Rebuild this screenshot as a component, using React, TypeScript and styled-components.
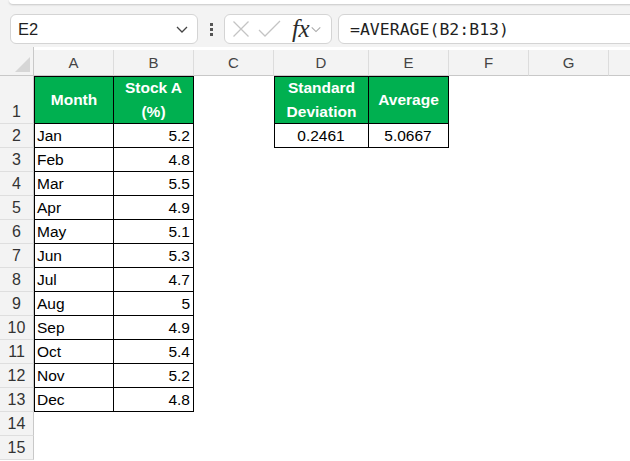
import React from 'react';
import styled, { createGlobalStyle, css } from 'styled-components';

const GlobalStyle = createGlobalStyle`
  html, body {
    margin: 0;
    padding: 0;
    background: #ffffff;
  }
  * {
    box-sizing: border-box;
  }
`;

const Page = styled.div`
  width: 630px;
  height: 461px;
  overflow: hidden;
  background: #f3f3f3;
  font-family: 'Liberation Sans', Arial, sans-serif;
  color: #000;
`;

const RibbonEdge = styled.div`
  height: 4px;
  margin: 0 -12px 0 9px;
  background: #ffffff;
  border-radius: 0 0 8px 8px;
  box-shadow: 0 1px 2px rgba(0, 0, 0, 0.18);
`;

const FormulaBar = styled.div`
  display: flex;
  align-items: center;
  height: 43px;
  padding: 10px 0 3px 10px;
`;

const Box = styled.div`
  height: 30px;
  background: #ffffff;
  border: 1px solid #d4d4d4;
  border-radius: 6px;
  display: flex;
  align-items: center;
`;

const NameBox = styled(Box)`
  width: 188px;
  padding: 0 8px 0 7px;
  justify-content: space-between;
  font-size: 16.5px;
  color: #1f1f1f;
`;

const Kebab = styled.div`
  width: 26px;
  display: flex;
  flex-direction: column;
  align-items: center;
  gap: 2px;
  span {
    width: 3px;
    height: 3px;
    background: #555;
  }
`;

const FxBox = styled(Box)`
  width: 108px;
  padding: 0 3px 0 7px;
  gap: 0;
`;

const FxLabel = styled.span`
  font-family: 'Liberation Serif', 'Times New Roman', serif;
  font-style: italic;
  font-size: 25px;
  line-height: 28px;
  color: #2b2b2b;
  margin: 0 1px 0 10px;
  letter-spacing: -0.5px;
`;

const FormulaInput = styled(Box)`
  flex: 1;
  margin: 0 -20px 0 6px;
  padding-left: 11px;
  font-family: 'DejaVu Sans Mono', monospace;
  font-size: 16.5px;
  color: #1f1f1f;
`;

const Sheet = styled.div`
  display: grid;
  grid-template-columns: 34px 80px 80px 80px 95px 80px 80px 80px 80px;
  grid-template-rows: 29px 48px repeat(15, 24px);
  background: #ffffff;
`;

const Corner = styled.div`
  background: #f3f3f3;
  border-right: 1px solid #c8c8c8;
  border-bottom: 1px solid #c8c8c8;
  position: relative;
  &::after {
    content: '';
    position: absolute;
    right: 3px;
    bottom: 3px;
    border-style: solid;
    border-width: 0 0 15px 15px;
    border-color: transparent transparent #d6d6d6 transparent;
  }
`;

const ColHead = styled.div`
  background: #f3f3f3;
  border-right: 1px solid #dcdcdc;
  border-bottom: 1px solid #c8c8c8;
  margin-top: 3px;
  display: flex;
  align-items: center;
  justify-content: center;
  font-size: 15px;
  color: #444;
`;

const RowHead = styled.div<{ $bottom?: boolean }>`
  background: #f3f3f3;
  border-right: 1px solid #c8c8c8;
  border-bottom: 1px solid #dedede;
  display: flex;
  align-items: ${(p) => (p.$bottom ? 'flex-end' : 'center')};
  justify-content: center;
  padding-bottom: ${(p) => (p.$bottom ? '2px' : '0')};
  font-size: 16px;
  color: #333;
`;

const Cell = styled.div<{
  $boxed?: boolean;
  $left?: boolean;
  $top?: boolean;
  $head?: boolean;
  $align?: 'left' | 'right' | 'center';
}>`
  display: flex;
  align-items: center;
  padding: 1px 3px 0 2px;
  font-size: 15.5px;
  line-height: 24px;
  justify-content: ${(p) =>
    p.$align === 'right' ? 'flex-end' : p.$align === 'center' ? 'center' : 'flex-start'};
  text-align: ${(p) => p.$align || 'left'};
  ${(p) =>
    p.$boxed &&
    css`
      border-right: 1px solid #000;
      border-bottom: 1px solid #000;
    `}
  ${(p) => p.$left && 'border-left: 1px solid #000;'}
  ${(p) => p.$top && 'border-top: 1px solid #000;'}
  ${(p) =>
    p.$head &&
    css`
      background: #00b050;
      color: #fff;
      font-weight: bold;
      padding: 0 2px;
    `}
`;

const Chevron = ({ size = 14, color = '#444' }: { size?: number; color?: string }) => (
  <svg width={size} height={size} viewBox="0 0 14 14">
    <polyline points="2,5 7,10 12,5" fill="none" stroke={color} strokeWidth="1.3" />
  </svg>
);

const CancelIcon = () => (
  <svg width="18" height="18" viewBox="0 0 18 18">
    <path d="M1.5 1.5 L16.5 16.5 M16.5 1.5 L1.5 16.5" stroke="#c4c4c4" strokeWidth="1.3" fill="none" />
  </svg>
);

const CheckIcon = () => (
  <svg width="24" height="18" viewBox="0 0 24 18" style={{ marginLeft: 8 }}>
    <polyline points="1,10 7,16 22,1" stroke="#c4c4c4" strokeWidth="1.3" fill="none" />
  </svg>
);

const columns = ['A', 'B', 'C', 'D', 'E', 'F', 'G', 'H'];

const stock: [string, string][] = [
  ['Jan', '5.2'],
  ['Feb', '4.8'],
  ['Mar', '5.5'],
  ['Apr', '4.9'],
  ['May', '5.1'],
  ['Jun', '5.3'],
  ['Jul', '4.7'],
  ['Aug', '5'],
  ['Sep', '4.9'],
  ['Oct', '5.4'],
  ['Nov', '5.2'],
  ['Dec', '4.8'],
];

const renderCell = (row: number, col: string) => {
  const key = `${col}${row}`;
  if (row === 1) {
    if (col === 'A') return <Cell key={key} $boxed $left $top $head $align="center">Month</Cell>;
    if (col === 'B')
      return (
        <Cell key={key} $boxed $top $head $align="center">
          Stock A<br />(%)
        </Cell>
      );
    if (col === 'D')
      return (
        <Cell key={key} $boxed $left $top $head $align="center">
          Standard<br />Deviation
        </Cell>
      );
    if (col === 'E') return <Cell key={key} $boxed $top $head $align="center">Average</Cell>;
  }
  if (row >= 2 && row <= 13) {
    const [month, value] = stock[row - 2];
    if (col === 'A') return <Cell key={key} $boxed $left>{month}</Cell>;
    if (col === 'B') return <Cell key={key} $boxed $align="right">{value}</Cell>;
  }
  if (row === 2) {
    if (col === 'D') return <Cell key={key} $boxed $left $align="center">0.2461</Cell>;
    if (col === 'E') return <Cell key={key} $boxed $align="center">5.0667</Cell>;
  }
  return <Cell key={key} />;
};

const rows = Array.from({ length: 15 }, (_, i) => i + 1);

export default function App() {
  return (
    <Page>
      <GlobalStyle />
      <RibbonEdge />
      <FormulaBar>
        <NameBox>
          <span>E2</span>
          <Chevron />
        </NameBox>
        <Kebab>
          <span />
          <span />
          <span />
        </Kebab>
        <FxBox>
          <CancelIcon />
          <CheckIcon />
          <FxLabel>fx</FxLabel>
          <Chevron size={12} color="#aaa" />
        </FxBox>
        <FormulaInput>=AVERAGE(B2:B13)</FormulaInput>
      </FormulaBar>
      <Sheet>
        <Corner />
        {columns.map((c) => (
          <ColHead key={c}>{c === 'H' ? '' : c}</ColHead>
        ))}
        {rows.map((r) => (
          <React.Fragment key={r}>
            <RowHead $bottom={r === 1}>{r}</RowHead>
            {columns.map((c) => renderCell(r, c))}
          </React.Fragment>
        ))}
      </Sheet>
    </Page>
  );
}
